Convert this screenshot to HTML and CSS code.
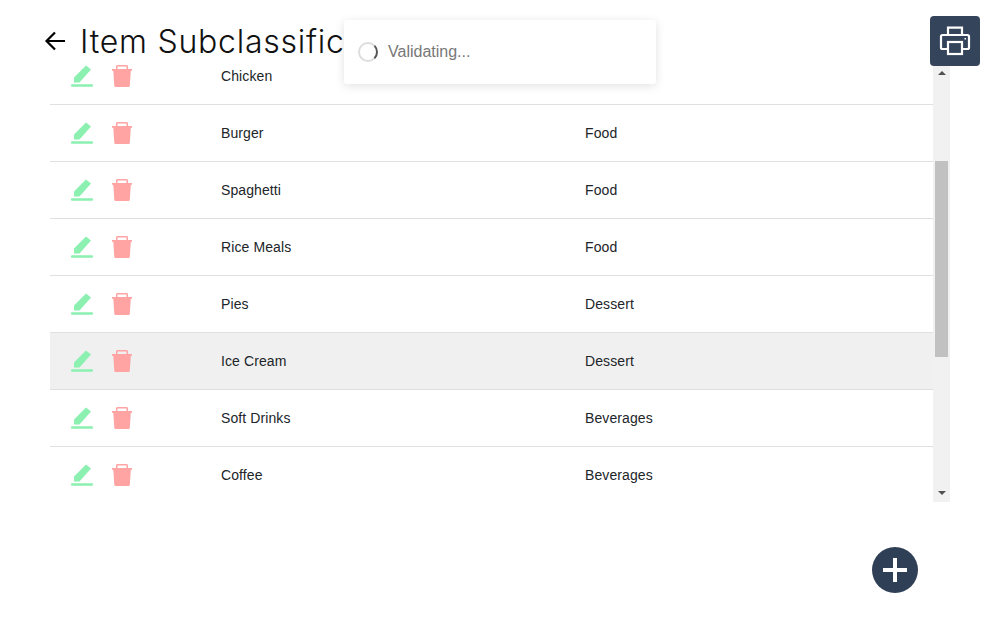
FILE: index.html
```html
<!DOCTYPE html>
<html lang="en">
<head>
  <meta charset="UTF-8">
  <meta name="viewport" content="width=device-width, initial-scale=1">
  <title>Item Subclassification</title>
  <link rel="stylesheet" href="styles.css">
</head>
<body>
  <header class="page-head">
    <svg class="back-icon" width="24" height="24" viewBox="0 0 24 24"><path d="M22 12H4M12 3.500L3.500 12l8.500 8.500" fill="none" stroke="#000" stroke-width="2.200"/></svg>
    <h1>Item Subclassification</h1>
  </header>

  <div class="table-wrap">
    <div class="list">
      <div class="list-inner">
        <div class="row">
          <div class="actions">
            <svg class="edit" width="22" height="22" viewBox="0 0 22 22"><path d="M3 17.500V12.500L15 .5l5 4L8.500 17.500z"/><rect y="19.200" width="22" height="2.500" rx="1"/></svg>
            <svg class="trash" width="20" height="22" viewBox="0 0 20 22"><path d="M4 4V1.500C4 .7 4.700 0 5.500 0h9c.8 0 1.500.7 1.500 1.500V4h4v1.700h-1.200l-1 15c-.1.8-.6 1.300-1.400 1.300H3.700c-.8 0-1.300-.5-1.400-1.300l-1-15H0V4zm1.500 0h9V1.500h-9z" fill-rule="evenodd"/></svg>
          </div>
          <div>Chicken</div>
          <div></div>
        </div>
        <div class="row">
          <div class="actions">
            <svg class="edit" width="22" height="22" viewBox="0 0 22 22"><path d="M3 17.500V12.500L15 .5l5 4L8.500 17.500z"/><rect y="19.200" width="22" height="2.500" rx="1"/></svg>
            <svg class="trash" width="20" height="22" viewBox="0 0 20 22"><path d="M4 4V1.500C4 .7 4.700 0 5.500 0h9c.8 0 1.500.7 1.500 1.500V4h4v1.700h-1.200l-1 15c-.1.8-.6 1.300-1.400 1.300H3.700c-.8 0-1.300-.5-1.400-1.300l-1-15H0V4zm1.500 0h9V1.500h-9z" fill-rule="evenodd"/></svg>
          </div>
          <div>Burger</div>
          <div>Food</div>
        </div>
        <div class="row">
          <div class="actions">
            <svg class="edit" width="22" height="22" viewBox="0 0 22 22"><path d="M3 17.500V12.500L15 .5l5 4L8.500 17.500z"/><rect y="19.200" width="22" height="2.500" rx="1"/></svg>
            <svg class="trash" width="20" height="22" viewBox="0 0 20 22"><path d="M4 4V1.500C4 .7 4.700 0 5.500 0h9c.8 0 1.500.7 1.500 1.500V4h4v1.700h-1.200l-1 15c-.1.8-.6 1.300-1.400 1.300H3.700c-.8 0-1.300-.5-1.400-1.300l-1-15H0V4zm1.500 0h9V1.500h-9z" fill-rule="evenodd"/></svg>
          </div>
          <div>Spaghetti</div>
          <div>Food</div>
        </div>
        <div class="row">
          <div class="actions">
            <svg class="edit" width="22" height="22" viewBox="0 0 22 22"><path d="M3 17.500V12.500L15 .5l5 4L8.500 17.500z"/><rect y="19.200" width="22" height="2.500" rx="1"/></svg>
            <svg class="trash" width="20" height="22" viewBox="0 0 20 22"><path d="M4 4V1.500C4 .7 4.700 0 5.500 0h9c.8 0 1.500.7 1.500 1.500V4h4v1.700h-1.200l-1 15c-.1.8-.6 1.300-1.400 1.300H3.700c-.8 0-1.300-.5-1.400-1.300l-1-15H0V4zm1.500 0h9V1.500h-9z" fill-rule="evenodd"/></svg>
          </div>
          <div>Rice Meals</div>
          <div>Food</div>
        </div>
        <div class="row">
          <div class="actions">
            <svg class="edit" width="22" height="22" viewBox="0 0 22 22"><path d="M3 17.500V12.500L15 .5l5 4L8.500 17.500z"/><rect y="19.200" width="22" height="2.500" rx="1"/></svg>
            <svg class="trash" width="20" height="22" viewBox="0 0 20 22"><path d="M4 4V1.500C4 .7 4.700 0 5.500 0h9c.8 0 1.500.7 1.500 1.500V4h4v1.700h-1.200l-1 15c-.1.8-.6 1.300-1.400 1.300H3.700c-.8 0-1.300-.5-1.400-1.300l-1-15H0V4zm1.500 0h9V1.500h-9z" fill-rule="evenodd"/></svg>
          </div>
          <div>Pies</div>
          <div>Dessert</div>
        </div>
        <div class="row hovered">
          <div class="actions">
            <svg class="edit" width="22" height="22" viewBox="0 0 22 22"><path d="M3 17.500V12.500L15 .5l5 4L8.500 17.500z"/><rect y="19.200" width="22" height="2.500" rx="1"/></svg>
            <svg class="trash" width="20" height="22" viewBox="0 0 20 22"><path d="M4 4V1.500C4 .7 4.700 0 5.500 0h9c.8 0 1.500.7 1.500 1.500V4h4v1.700h-1.200l-1 15c-.1.8-.6 1.300-1.400 1.300H3.700c-.8 0-1.300-.5-1.400-1.300l-1-15H0V4zm1.500 0h9V1.500h-9z" fill-rule="evenodd"/></svg>
          </div>
          <div>Ice Cream</div>
          <div>Dessert</div>
        </div>
        <div class="row">
          <div class="actions">
            <svg class="edit" width="22" height="22" viewBox="0 0 22 22"><path d="M3 17.500V12.500L15 .5l5 4L8.500 17.500z"/><rect y="19.200" width="22" height="2.500" rx="1"/></svg>
            <svg class="trash" width="20" height="22" viewBox="0 0 20 22"><path d="M4 4V1.500C4 .7 4.700 0 5.500 0h9c.8 0 1.500.7 1.500 1.500V4h4v1.700h-1.200l-1 15c-.1.8-.6 1.300-1.400 1.300H3.700c-.8 0-1.300-.5-1.400-1.300l-1-15H0V4zm1.500 0h9V1.500h-9z" fill-rule="evenodd"/></svg>
          </div>
          <div>Soft Drinks</div>
          <div>Beverages</div>
        </div>
        <div class="row">
          <div class="actions">
            <svg class="edit" width="22" height="22" viewBox="0 0 22 22"><path d="M3 17.500V12.500L15 .5l5 4L8.500 17.500z"/><rect y="19.200" width="22" height="2.500" rx="1"/></svg>
            <svg class="trash" width="20" height="22" viewBox="0 0 20 22"><path d="M4 4V1.500C4 .7 4.700 0 5.500 0h9c.8 0 1.500.7 1.500 1.500V4h4v1.700h-1.200l-1 15c-.1.8-.6 1.300-1.400 1.300H3.700c-.8 0-1.300-.5-1.400-1.300l-1-15H0V4zm1.500 0h9V1.500h-9z" fill-rule="evenodd"/></svg>
          </div>
          <div>Coffee</div>
          <div>Beverages</div>
        </div>
      </div>
    </div>
    <div class="scrollbar">
      <div class="arrow-up"></div>
      <div class="thumb"></div>
      <div class="arrow-down"></div>
    </div>
  </div>

  <div class="toast">
    <div class="spinner"></div>
    <span>Validating...</span>
  </div>

  <button class="print-btn">
    <svg width="32" height="32" viewBox="0 0 32 32" fill="none" stroke="#fff" stroke-width="2.200">
      <path d="M9 24H3.500A1.500 1.500 0 0 1 2 22.500V11.500A1.500 1.500 0 0 1 3.500 10h25A1.500 1.500 0 0 1 30 11.500v11a1.500 1.500 0 0 1-1.500 1.500H23"/>
      <path d="M9 10V2.700h14V10"/>
      <rect x="9" y="17" width="14" height="12"/>
      <rect x="25.500" y="13" width="1.500" height="1.500" fill="#fff" stroke="none"/>
    </svg>
  </button>

  <button class="add-btn"><span class="plus"></span></button>
</body>
</html>
```

FILE: styles.css
```css
* { box-sizing: border-box; }
html, body {
  height: 625px;
  overflow: hidden;
}
body {
  font-family: 'Liberation Sans', Arial, sans-serif;
  margin: 0;
  background: #fff;
  color: #212529;
}
.page-head {
  display: flex;
  align-items: center;
  height: 62px;
  padding: 20px 0 0 43px;
  gap: 13px;
}
.page-head h1 {
  margin: 0;
  font-family: Inter, 'Noto Sans', sans-serif;
  font-size: 32px;
  font-weight: 300;
  letter-spacing: 0.75px;
  color: #111;
  white-space: nowrap;
}
.table-wrap {
  display: flex;
  width: 900px;
  height: 440px;
  margin-left: 50px;
}
.list {
  flex: 1;
  overflow: hidden;
}
.list-inner {
  margin-top: -14px;
}
.row {
  display: grid;
  grid-template-columns: 171px 364px 1fr;
  align-items: center;
  height: 57px;
  border-bottom: 1px solid #e0e0e0;
  font-size: 14px;
  letter-spacing: 0.1px;
}
.row.hovered {
  background: #f0f0f0;
}
.actions {
  display: flex;
  align-items: center;
  gap: 19px;
  padding-left: 21px;
}
.edit { fill: #8bf0b0; }
.trash { fill: #ffa3a3; }
.scrollbar {
  width: 17px;
  background: #f1f1f1;
  display: flex;
  flex-direction: column;
  align-items: center;
}
.arrow-up {
  margin-top: 9px;
  border-left: 4px solid transparent;
  border-right: 4px solid transparent;
  border-bottom: 4px solid #505050;
}
.thumb {
  width: 13px;
  height: 196px;
  margin-top: 86px;
  background: #c1c1c1;
}
.arrow-down {
  margin-top: 134px;
  border-left: 4px solid transparent;
  border-right: 4px solid transparent;
  border-top: 4px solid #505050;
}
.toast {
  position: absolute;
  top: 20px;
  left: 344px;
  width: 312px;
  height: 64px;
  display: flex;
  align-items: center;
  gap: 10px;
  padding: 0 14px;
  background: #fff;
  border-radius: 3px;
  box-shadow: 0 2px 10px rgba(0, 0, 0, 0.12);
  font-size: 16px;
  color: #777;
}
.spinner {
  width: 20px;
  height: 20px;
  border: 2px solid #ddd;
  border-right-color: #555;
  border-radius: 50%;
}
.print-btn {
  position: absolute;
  top: 16px;
  left: 930px;
  width: 50px;
  height: 50px;
  padding: 0;
  border: none;
  border-radius: 4px;
  background: #34445a;
  display: flex;
  align-items: center;
  justify-content: center;
}
.add-btn {
  position: absolute;
  top: 547px;
  left: 872px;
  width: 46px;
  height: 46px;
  padding: 0;
  border: none;
  border-radius: 50%;
  background: #2f3f55;
  display: flex;
  align-items: center;
  justify-content: center;
}
.plus {
  display: block;
  width: 24px;
  height: 24px;
  background:
    linear-gradient(#fff, #fff) center / 24px 4px no-repeat,
    linear-gradient(#fff, #fff) center / 4px 24px no-repeat;
}
```
